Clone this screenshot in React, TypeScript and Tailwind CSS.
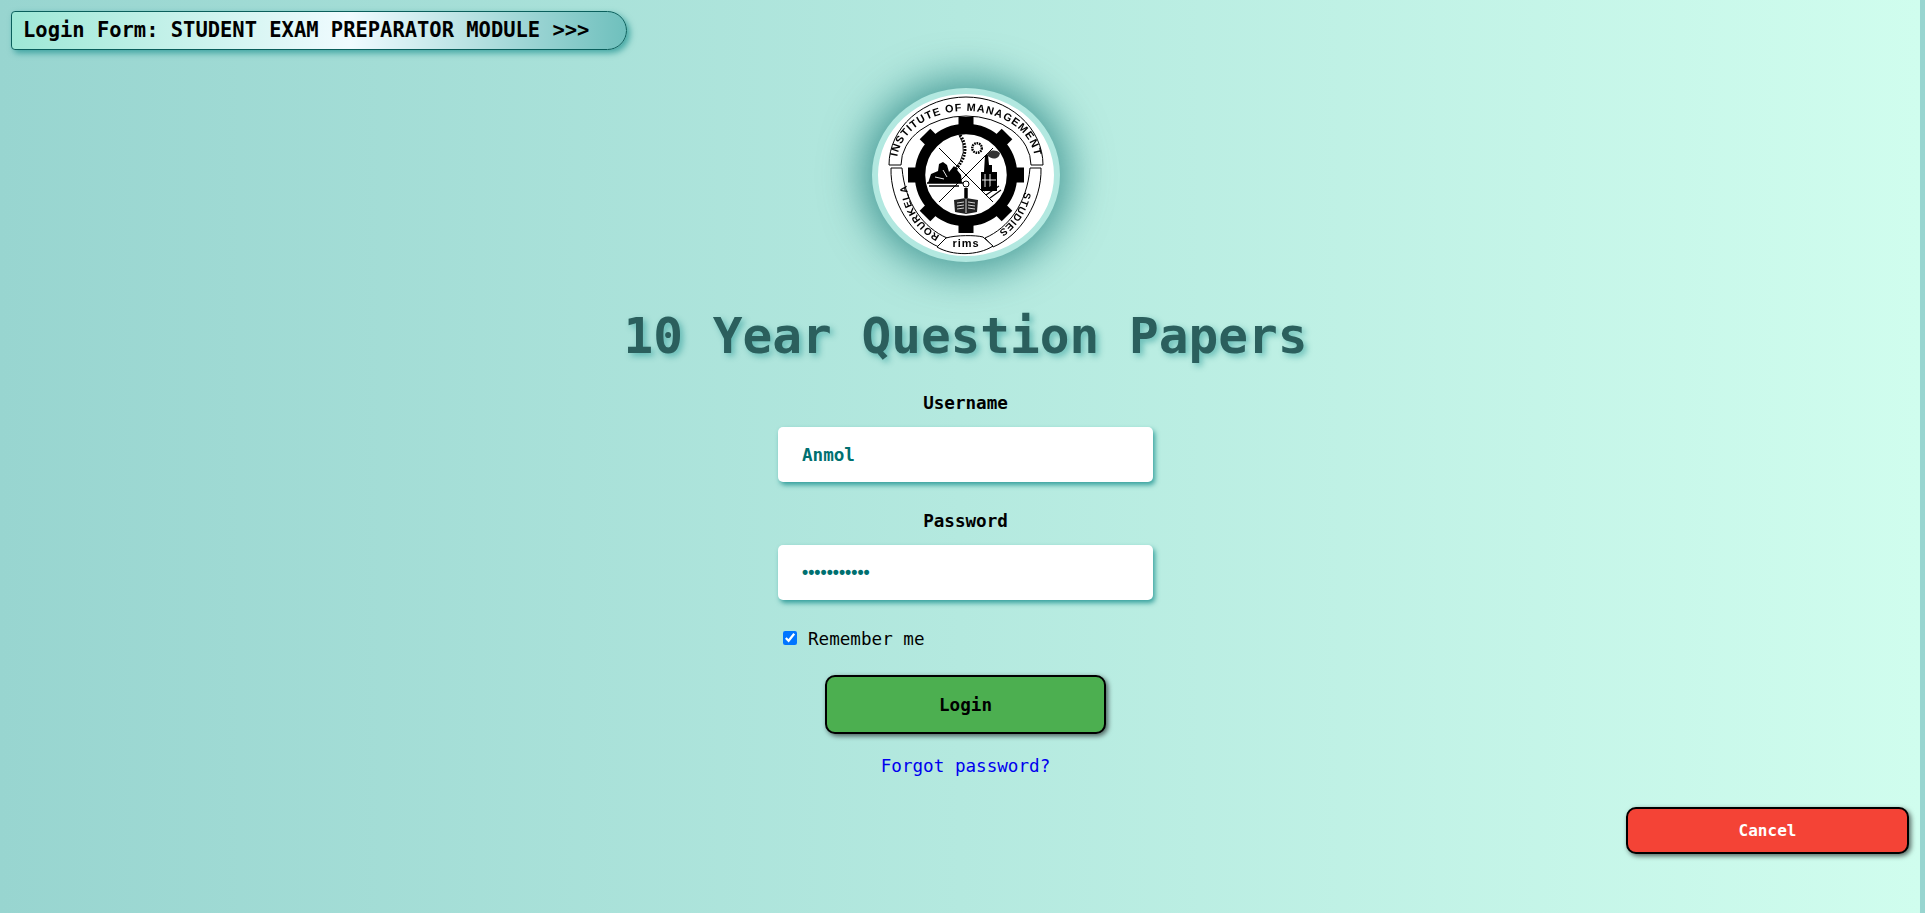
import { useState } from "react";

// Drawn college crest. Lettering stays as real text on circular paths.
function Crest() {
  const teeth = [0, 45, 90, 135, 180, 225, 270, 315];
  return (
    <svg viewBox="0 0 176 162" className="h-full w-full blur-[0.35px]" aria-label="Rourkela Institute of Management Studies crest">
      <defs>
        <path id="crest-top" d="M 19 68 A 69 51 0 0 1 157 68" />
        <path id="crest-left" d="M 68 144 C 44 135 29 112 28 84" />
        <path id="crest-right" d="M 148 84 C 147 112 132 135 108 144" />
      </defs>

      {/* banner outlines */}
      <g fill="none" stroke="#000" strokeWidth="1">
        <path d="M 11 71 A 77 68 0 0 1 165 71" />
        <path d="M 23 71 A 65 49 0 0 1 153 71" />
        <path d="M 11 71 H 23 M 153 71 H 165" />
        <path d="M 13 74 H 24 M 152 74 H 163" />
        <path d="M 13 74 C 12 108 34 142 61 153 L 69 144 C 46 134 27 110 24 74" />
        <path d="M 163 74 C 164 108 142 142 115 153 L 107 144 C 130 134 149 110 152 74" />
        <path d="M 68 144 C 78 141 98 141 105 143 L 115 152 C 100 162 74 162 59 153 Z" fill="#fff" />
      </g>

      <text fontFamily="Liberation Sans, sans-serif" fontSize="10.8" fontWeight="700" letterSpacing="1" fill="#000">
        <textPath href="#crest-top" startOffset="50%" textAnchor="middle">INSTITUTE OF MANAGEMENT</textPath>
      </text>
      <text fontFamily="Liberation Sans, sans-serif" fontSize="10" fontWeight="700" letterSpacing="0.8" fill="#000">
        <textPath href="#crest-left" startOffset="50%" textAnchor="middle">ROURKELA</textPath>
      </text>
      <text fontFamily="Liberation Sans, sans-serif" fontSize="10" fontWeight="700" letterSpacing="0.8" fill="#000">
        <textPath href="#crest-right" startOffset="50%" textAnchor="middle">STUDIES</textPath>
      </text>
      <text x="88" y="153" textAnchor="middle" fontFamily="Liberation Sans, sans-serif" fontSize="11" fontWeight="700" letterSpacing="1" fill="#000">rims</text>

      {/* gear */}
      <g transform="translate(88 81)">
        {teeth.map((a) => (
          <rect key={a} x="-7.5" y="-58" width="15" height="12" transform={`rotate(${a})`} fill="#000" />
        ))}
        <circle r="46" fill="none" stroke="#000" strokeWidth="10.5" />
        <path d="M -27 -27 L 27 27 M 27 -27 L -27 27" stroke="#000" strokeWidth="1" />
      </g>

      {/* small cog with its arc */}
      <path d="M 82 41 Q 94 58 77 76" fill="none" stroke="#000" strokeWidth="3" strokeDasharray="1.8 1.2" />
      <path d="M 81 41 Q 92 58 76 76" fill="none" stroke="#000" strokeWidth="0.8" />
      <circle cx="99" cy="54" r="4.8" fill="none" stroke="#000" strokeWidth="2.4" strokeDasharray="1.6 0.8" />

      {/* workers, left quadrant */}
      <path d="M 50 89 L 53 80 L 60 77 L 61 70 L 65 68 L 69 71 L 71 78 L 76 72 L 83 81 L 84 89 Z" fill="#000" />
      <path d="M 49 89 H 85 M 51 92 H 81" stroke="#000" strokeWidth="1.4" />
      <path d="M 57 83 L 66 85 M 65 76 L 69 83" stroke="#fff" strokeWidth="0.9" />

      {/* factory, right quadrant */}
      <path d="M 107 61 H 110 L 111 71 H 114 V 78 H 119 V 97 H 103 V 78 H 106 Z" fill="#000" />
      <path d="M 107 80 V 93 M 112 80 V 93 M 104 86 H 118" stroke="#fff" strokeWidth="0.9" />
      <path d="M 109 61 C 110 56 118 55 122 59 C 121 66 113 66 109 61 Z" fill="#333" />
      <path d="M 108 101 L 121 92 M 112 104 L 123 96 M 106 97 L 117 90" stroke="#000" strokeWidth="1.1" />

      {/* lamp and open book, bottom quadrant */}
      <path d="M 88 94 V 104" stroke="#000" strokeWidth="3.5" />
      <circle cx="88" cy="90" r="3" fill="none" stroke="#000" strokeWidth="1" />
      <path d="M 76 106 L 88 104 L 100 106 L 99 118 L 88 120 L 77 118 Z" fill="#222" />
      <path d="M 88 105 V 119 M 79 109 L 86 108 M 79 112 L 86 111 M 79 115 L 86 114 M 90 108 L 97 109 M 90 111 L 97 112 M 90 114 L 97 115" stroke="#fff" strokeWidth="0.8" />
    </svg>
  );
}

export default function App() {
  const [username, setUsername] = useState("Anmol");
  const [password, setPassword] = useState("12345678901");
  const [remember, setRemember] = useState(true);

  return (
    <div className="h-[913px] overflow-hidden bg-[linear-gradient(90deg,#98d5d0,#d0fdee)] bg-[length:1920px_100%] font-['DejaVu_Sans_Mono',monospace] text-black">
      {/* Header pill */}
      <div className="pt-[11px] pl-[11px]">
        <div className="flex h-[39px] w-[616px] items-center rounded-tl-[4px] rounded-bl-[4px] rounded-r-[20px] border border-[#0a5f5c] bg-[linear-gradient(90deg,#9de8d6,#f0fbff_55%,#6fc0bd)] pl-[11px] text-[20.47px] leading-none font-bold whitespace-nowrap shadow-[3px_3px_6px_rgba(0,128,128,0.6)]">
          Login Form: STUDENT EXAM PREPARATOR MODULE &gt;&gt;&gt;
        </div>
      </div>

      <div className="flex w-[1931px] flex-col items-center">
        {/* Logo */}
        <div className="mt-[38px] h-[174px] w-[188px] rounded-[50%] border-[6px] border-[#b2e8e0] bg-white shadow-[0_0_40px_10px_rgba(0,105,105,0.6)]">
          <Crest />
        </div>

        <h1 className="mt-[46px] text-[49.4px] leading-[56px] font-bold text-[#2b5f5d] [text-shadow:3px_3px_6px_rgba(0,128,128,0.45)]">
          10 Year Question Papers
        </h1>

        <label htmlFor="username" className="mt-[29px] text-[17.6px] leading-[20px] font-bold">
          Username
        </label>
        <input
          id="username"
          value={username}
          onChange={(e) => setUsername(e.target.value)}
          className="mt-[14px] h-[55px] w-[375px] rounded-[5px] bg-white px-[24px] text-[17.6px] font-bold text-[#007070] shadow-[2px_3px_5px_rgba(0,128,128,0.7)] outline-none"
        />

        <label htmlFor="password" className="mt-[29px] text-[17.6px] leading-[20px] font-bold">
          Password
        </label>
        <input
          id="password"
          type="password"
          value={password}
          onChange={(e) => setPassword(e.target.value)}
          className="mt-[14px] h-[55px] w-[375px] rounded-[5px] bg-white px-[24px] font-['Liberation_Sans',sans-serif] text-[17.6px] font-bold text-[#007070] shadow-[2px_3px_5px_rgba(0,128,128,0.7)] outline-none"
        />

        <label className="mt-[29px] flex w-[375px] items-center pl-[5px] text-[17.6px] leading-[20px]">
          <input
            type="checkbox"
            checked={remember}
            onChange={(e) => setRemember(e.target.checked)}
            className="m-0 mb-[2px] h-[14px] w-[14px] accent-[#0075ff]"
          />
          <span className="ml-[11px]">Remember me</span>
        </label>

        <button className="mt-[26px] h-[59px] w-[281px] rounded-[10px] border-2 border-black bg-[#4caf50] pt-[2px] text-[17.6px] font-bold shadow-[2px_2px_5px_rgba(0,0,0,0.6)]">
          Login
        </button>

        <a href="#" className="mt-[22px] text-[17.6px] leading-[20px] text-[#0000ee]">
          Forgot password?
        </a>
      </div>

      {/* Cancel sits at the right edge */}
      <div className="mt-[31px] flex justify-end pr-[16px]">
        <button className="h-[47px] w-[283px] rounded-[10px] border-2 border-black bg-[#f44336] text-[16px] font-bold text-white shadow-[2px_2px_5px_rgba(0,0,0,0.6)]">
          Cancel
        </button>
      </div>
    </div>
  );
}
